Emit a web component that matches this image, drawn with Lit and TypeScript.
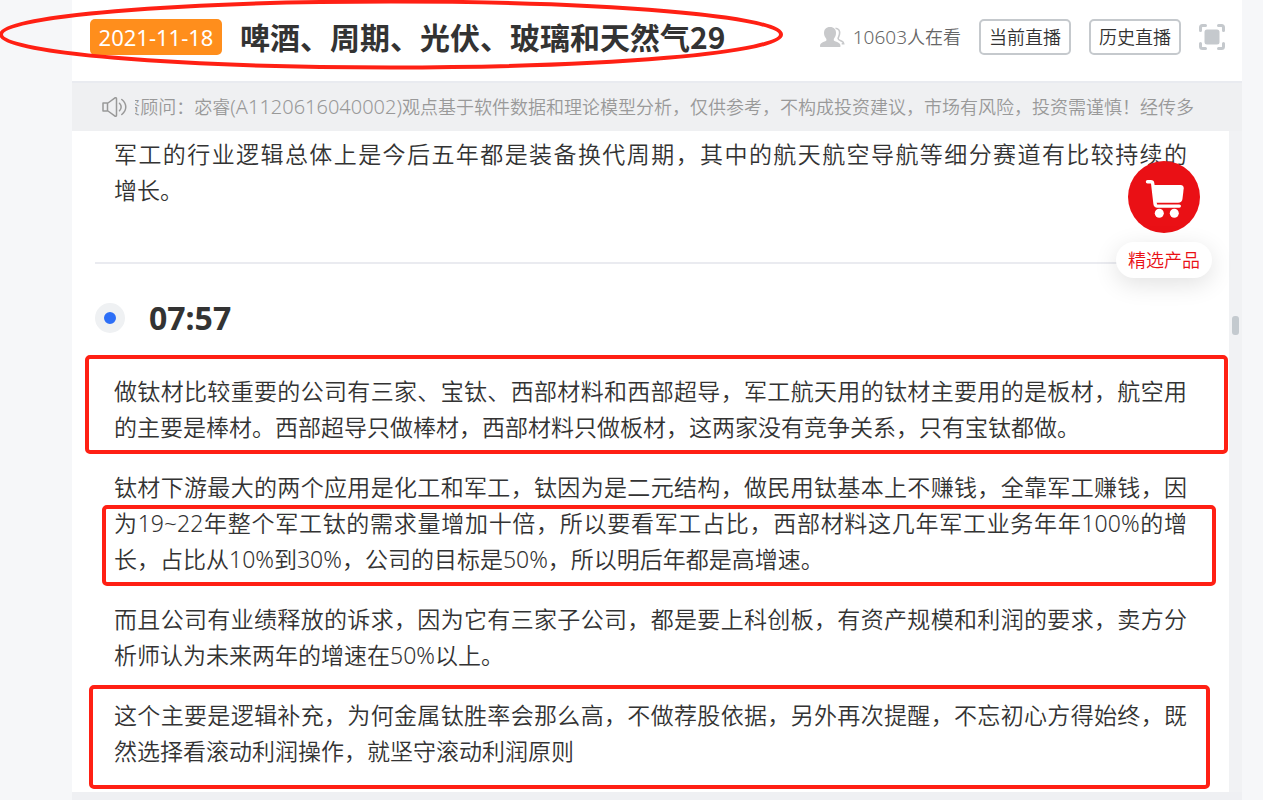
import { LitElement, html, css, svg } from "lit";
import { customElement } from "lit/decorators.js";

const personIcon = svg`
  <svg class="person" viewBox="0 0 25 20" aria-hidden="true">
    <path fill="none" stroke="#c8c9cb" stroke-width="1.6" d="M15.500 1.200c3.400.3 4.600 3 4 6-.4 2-1.200 3-1.400 4.300 0 1.500 2 1.900 3.700 2.700 1.200.6 1.800 1.300 1.900 2.500h-2"/>
    <path fill="#c8c9cb" d="M10 0c4 0 6 2.500 6 6 0 2.800-1.200 4.600-2.200 5.900v1.700c1.200 1.100 4.200 1.500 5.700 2.800.8.7 1 1.700 1 3.100 0 .3-.2.500-.5.500H.5c-.3 0-.5-.2-.5-.5 0-1.400.2-2.400 1-3.100 1.500-1.300 4.300-1.700 5.400-2.800v-1.700C5.300 10.600 4 8.800 4 6c0-3.500 2-6 6-6z"/>
  </svg>`;

const expandIcon = svg`
  <svg class="expand" viewBox="0 0 26 26" aria-hidden="true">
    <rect x="5.500" y="5.500" width="15" height="15" rx="2.500" fill="#c5c9cd"/>
    <path fill="none" stroke="#c5c9cd" stroke-width="3" stroke-linecap="round" stroke-linejoin="round"
      d="M1.500 6.500v-3q0-2 2-2h3M19.500 1.500h3q2 0 2 2v3M24.500 19.500v3q0 2-2 2h-3M6.500 24.500h-3q-2 0-2-2v-3"/>
  </svg>`;

const speakerIcon = svg`
  <svg class="speaker" viewBox="0 0 25 20" aria-hidden="true">
    <path fill="none" stroke="#999" stroke-width="1.500" stroke-linejoin="round" stroke-linecap="round"
      d="M1 6h5l7-5.200q1.500-.3 1.500 1v16.400q0 1.300-1.500 1L6 14H1zM5.500 6v8M17.500 6.200c2.200 2.200 2.200 5.400 0 7.600M19.800 2.500c5.300 4.300 5.300 10.700 0 15"/>
  </svg>`;

const cartIcon = svg`
  <svg class="cart" viewBox="0 0 72 72" aria-hidden="true">
    <path fill="none" stroke="#fff" stroke-width="3.400" stroke-linecap="round" stroke-linejoin="round" d="M19.500 20.800h3.200q1.800 0 2 1.800l2.400 20.500q.3 2 2.200 2h22"/>
    <path fill="#fff" d="M25 24h27.500q3.400 0 3.200 3.500l-1.200 10.300q-.5 4-4.500 4H27.500z"/>
    <circle cx="31.300" cy="52.300" r="4.500" fill="#fff"/>
    <circle cx="46.300" cy="52.300" r="4.500" fill="#fff"/>
  </svg>`;

@customElement("app-root")
export class AppRoot extends LitElement {
  static styles = css`
    :host {
      display: block;
      min-height: 100vh;
      background: #f6f7f9;
      color: #333;
      font-family: "Noto Sans", "Noto Sans CJK SC", sans-serif;
      text-spacing-trim: space-all;
    }
    * { box-sizing: border-box; }
    svg { display: block; flex: none; }
    .page {
      display: flex;
      flex-direction: column;
      min-height: 100vh;
      margin: 0 21px 0 72px;
      background: #eff0f3;
    }
    .header {
      position: relative;
      display: flex;
      align-items: center;
      height: 81px;
      padding: 0 17px 7px 18px;
      background: #fff;
    }
    .date {
      flex: none;
      min-width: 132px;
      padding: 0 8px;
      border-radius: 5px;
      background: #ff8e1c;
      color: #fff;
      font-size: 22px;
      line-height: 36px;
      text-align: center;
    }
    .title {
      flex: 1;
      margin: 0 0 0 18px;
      padding-bottom: 2px;
      font-family: "Noto Sans CJK SC", sans-serif;
      font-size: 30px;
      line-height: 36px;
      font-weight: 700;
      white-space: nowrap;
    }
    .ellipse {
      position: absolute;
      left: -72px;
      top: 0;
      width: 784px;
      height: 70px;
      pointer-events: none;
    }
    .tools {
      display: flex;
      align-items: center;
      gap: 18px;
    }
    .viewers {
      display: flex;
      align-items: center;
      gap: 8px;
      color: #666;
      font-size: 18px;
      font-weight: 350;
      line-height: 36px;
      white-space: nowrap;
    }
    .latin { font-size: 19px; }
    .ticker .latin { font-size: 20px; }
    .person, .speaker { width: 25px; height: 20px; }
    .btn {
      height: 36px;
      padding: 0 8px 2px;
      border: 2px solid #c5c9cd;
      border-radius: 5px;
      background: #fff;
      color: #333;
      font: 350 18px/30px "Noto Sans CJK SC", sans-serif;
      white-space: nowrap;
    }
    .icon-btn {
      padding: 0;
      border: 0;
      background: none;
    }
    .expand { width: 26px; height: 26px; }
    .notice {
      display: flex;
      align-items: center;
      gap: 8px;
      height: 50px;
      padding: 0 48px 0 30px;
      border-top: 2px solid #e9ebf0;
      background: #eff0f2;
      color: #999;
      font-size: 18px;
      font-weight: 350;
    }
    .ticker {
      display: flex;
      justify-content: flex-end;
      flex: 1;
      min-width: 0;
      overflow: hidden;
      line-height: 30px;
      white-space: nowrap;
    }
    .body {
      position: relative;
      display: flex;
      background: #fff;
    }
    .feed {
      flex: 1;
      min-width: 0;
      padding: 5px 42px 23px;
    }
    .track {
      flex: none;
      width: 13px;
      padding: 185px 3px 0;
      background: #f1f2f4;
    }
    .thumb {
      height: 19px;
      border-radius: 3px;
      background: #c4cacf;
    }
    .para {
      position: relative;
      margin: 0 0 24px;
      font-size: 23px;
      font-weight: 350;
      line-height: 36px;
      text-align: justify;
    }
    .para:last-child { margin-bottom: 0; }
    .keep { white-space: nowrap; }
    .rule {
      height: 2px;
      margin: 54px 0 36px -19px;
      border: 0;
      background: #eaebf0;
    }
    .stamp {
      display: flex;
      align-items: center;
      gap: 24px;
      margin: 0 0 37px -19px;
    }
    .dot {
      width: 30px;
      height: 30px;
      border: 9px solid #eff1f3;
      border-radius: 50%;
      background: #2d6ff7;
    }
    .time {
      margin: 0;
      font-size: 32px;
      line-height: 36px;
      font-weight: 700;
    }
    .mark {
      position: absolute;
      border: 4px solid #ff2014;
      border-radius: 5px;
      pointer-events: none;
    }
    .mark-a { inset: -18px -41px -9px -29px; }
    .mark-b { inset: 36px -29px -9px -12px; }
    .mark-c { inset: -12px -23px -20px -25px; }
    .shop {
      position: absolute;
      top: 30px;
      right: 30px;
      display: flex;
      flex-direction: column;
      align-items: center;
      gap: 9px;
      color: #ea1015;
      text-decoration: none;
    }
    .cart {
      width: 72px;
      height: 72px;
      border-radius: 50%;
      background: #ea1015;
    }
    .label {
      padding: 0 12px;
      border-radius: 18px;
      background: #fff;
      box-shadow: 0 6px 24px rgba(0, 0, 0, 0.12);
      font-size: 18px;
      font-weight: 350;
      line-height: 36px;
    }
  `;

  render() {
    return html`
      <div class="page">
        <header class="header">
          <time class="date" datetime="2021-11-18">2021-11-18</time>
          <h1 class="title">啤酒、周期、光伏、玻璃和天然气29</h1>
          <div class="tools">
            <div class="viewers">${personIcon}<span><span class="latin">10603</span>人在看</span></div>
            <button class="btn" type="button">当前直播</button>
            <button class="btn" type="button">历史直播</button>
            <button class="icon-btn" type="button" aria-label="全屏">${expandIcon}</button>
          </div>
          <svg class="ellipse" viewBox="0 0 784 70" aria-hidden="true">
            <ellipse cx="391" cy="34.500" rx="390" ry="33" fill="none" stroke="#ff2014" stroke-width="4" />
          </svg>
        </header>
        <div class="notice">
          ${speakerIcon}
          <div class="ticker"><span>资顾问：宓睿<span class="latin">(A1120616040002)</span>观点基于软件数据和理论模型分析，仅供参考，不构成投资建议，市场有风险，投资需谨慎！经传多</span></div>
        </div>
        <main class="body">
          <div class="feed">
            <p class="para">军工的行业逻辑总体上是今后五年都是装备换代周期，其中的航天航空导航等细分赛道有比较持续的<span class="keep">增长。</span></p>
            <hr class="rule" />
            <div class="stamp"><span class="dot"></span><h2 class="time">07:57</h2></div>
            <p class="para">做钛材比较重要的公司有三家、宝钛、西部材料和西部超导，军工航天用的钛材主要用的是板材，航空用的主要是棒材。西部超导只做棒材，西部材料只做板材，这两家没有竞争关系，只有宝钛都做。<span class="mark mark-a"></span></p>
            <p class="para">钛材下游最大的两个应用是化工和军工，钛因为是二元结构，做民用钛基本上不赚钱，全靠军工赚钱，因为19~22年整个军工钛的需求量增加十倍，所以要看军工占比，西部材料这几年军工业务年年100%的增长，占比从10%到30%，公司的目标是50%，所以明后年都是高增速。<span class="mark mark-b"></span></p>
            <p class="para">而且公司有业绩释放的诉求，因为它有三家子公司，都是要上科创板，有资产规模和利润的要求，卖方分析师认为未来两年的增速在50%以上。</p>
            <p class="para">这个主要是逻辑补充，为何金属钛胜率会那么高，不做荐股依据，另外再次提醒，不忘初心方得始终，既然选择看滚动利润操作，就坚守滚动利润原则<span class="mark mark-c"></span></p>
          </div>
          <div class="track"><div class="thumb"></div></div>
          <a class="shop" href="#">${cartIcon}<span class="label">精选产品</span></a>
        </main>
      </div>
    `;
  }
}
